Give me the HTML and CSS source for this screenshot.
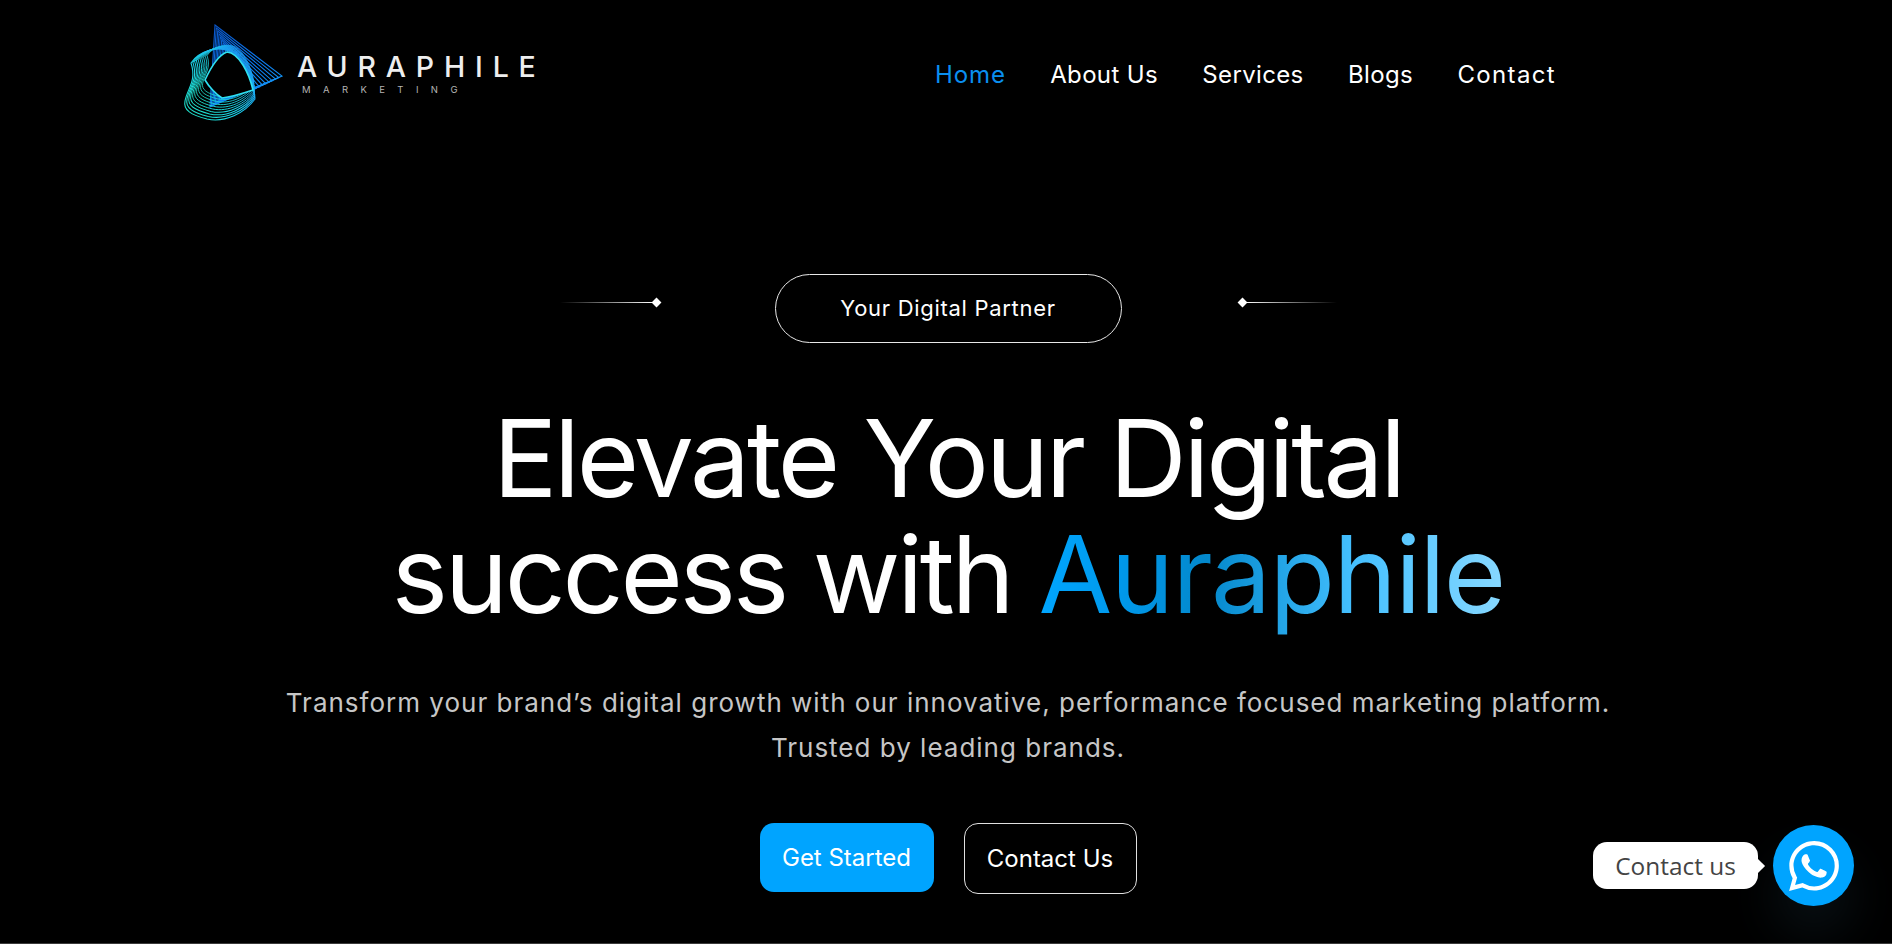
FILE: index.html
```html
<!DOCTYPE html>
<html lang="en">
<head>
<meta charset="utf-8">
<title>Auraphile Marketing</title>
<link rel="stylesheet" href="styles.css">
</head>
<body>
<div class="page">
  <header class="header">
    <a class="logo" href="#">
      <svg class="logo-mark" viewBox="0 0 120 115" width="120" height="115" aria-hidden="true">
        <defs>
          <linearGradient id="blue" gradientUnits="userSpaceOnUse" x1="40" y1="10" x2="100" y2="90">
            <stop offset="0" stop-color="#0a55c8"/>
            <stop offset="0.6" stop-color="#0c7cf0"/>
            <stop offset="1" stop-color="#1aa4f5"/>
          </linearGradient>
          <linearGradient id="teal" gradientUnits="userSpaceOnUse" x1="10" y1="100" x2="75" y2="50">
            <stop offset="0" stop-color="#1fe0c4"/>
            <stop offset="0.5" stop-color="#1cd0e8"/>
            <stop offset="1" stop-color="#1a90f5"/>
          </linearGradient>
          <path id="blob" d="M16 48C24 36 42 31 54 36C66 42 76 62 80 84C70 98 50 108 32 104C16 100 8 95 10 86C12 74 22 66 16 48Z"/>
        </defs>
        <g class="tri">
          <path d="M40 10L107 61L35 92Z"/>
          <path d="M41.3 13L103.8 62.6L36.3 91Z"/>
          <path d="M42.7 16L100.6 64.1L37.7 90Z"/>
          <path d="M44 19L97.3 65.7L39 89Z"/>
          <path d="M45.3 22L94.1 67.2L40.3 88Z"/>
          <path d="M46.7 25L90.9 68.8L41.7 87Z"/>
          <path d="M48 28L87.7 70.3L43 86Z"/>
          <path d="M49.3 31L84.4 71.9L44.3 85Z"/>
          <path d="M50.7 34L81.2 73.4L45.7 84Z"/>
        </g>
        <g class="band">
          <use href="#blob"/>
          <use href="#blob" transform="translate(2.3 .6) scale(.97)"/>
          <use href="#blob" transform="translate(4.6 1.2) scale(.94)"/>
          <use href="#blob" transform="translate(6.8 1.8) scale(.91)"/>
          <use href="#blob" transform="translate(9.1 2.4) scale(.88)"/>
          <use href="#blob" transform="translate(11.4 3) scale(.85)"/>
          <use href="#blob" transform="translate(13.6 3.6) scale(.82)"/>
          <use href="#blob" transform="translate(15.9 4.2) scale(.79)"/>
          <use href="#blob" transform="translate(18.2 4.8) scale(.76)"/>
          <use href="#blob" transform="translate(20.4 5.4) scale(.73)"/>
        </g>
        <path class="hole" d="M52 37C64 38 74 58 78 75C66 79 56 82 47 83C42 80 34 72 30 65C36 52 44 40 52 37Z"/>
      </svg>
      <span class="logo-text">
        <span class="logo-name">AURAPHILE</span>
        <span class="logo-sub">MARKETING</span>
      </span>
    </a>
    <nav class="nav">
      <a class="nav-link active" href="#">Home</a>
      <a class="nav-link" href="#">About Us</a>
      <a class="nav-link" href="#">Services</a>
      <a class="nav-link" href="#">Blogs</a>
      <a class="nav-link nav-last" href="#">Contact</a>
    </nav>
  </header>

  <main class="hero">
    <div class="tag-row">
      <span class="orn orn-left"><i class="line"></i><i class="dia"></i></span>
      <span class="pill">Your Digital Partner</span>
      <span class="orn orn-right"><i class="dia"></i><i class="line"></i></span>
    </div>
    <h1 class="title">Elevate Your Digital<br>success with <span class="grad">Auraphile</span></h1>
    <p class="lead">Transform your brand’s digital growth with our innovative, performance focused marketing platform.<br>Trusted by leading brands.</p>
    <div class="actions">
      <a class="btn btn-fill" href="#">Get Started</a>
      <a class="btn btn-line" href="#">Contact Us</a>
    </div>
  </main>
</div>

<div class="chat">
  <span class="chat-bubble">Contact us</span>
  <a class="chat-btn" href="#" aria-label="WhatsApp">
    <svg viewBox="0 0 24 24" width="50" height="50" aria-hidden="true"><path fill="#fff" d="M17.472 14.382c-.297-.149-1.758-.867-2.03-.967-.273-.099-.471-.148-.67.15-.197.297-.767.966-.94 1.164-.173.199-.347.223-.644.075-.297-.15-1.255-.463-2.39-1.475-.883-.788-1.48-1.761-1.653-2.059-.173-.297-.018-.458.13-.606.134-.133.298-.347.446-.52.149-.174.198-.298.298-.497.099-.198.05-.371-.025-.52-.075-.149-.669-1.612-.916-2.207-.242-.579-.487-.5-.669-.51-.173-.008-.371-.01-.57-.01-.198 0-.52.074-.792.372-.272.297-1.04 1.016-1.04 2.479 0 1.462 1.065 2.875 1.213 3.074.149.198 2.096 3.2 5.077 4.487.709.306 1.262.489 1.694.625.712.227 1.36.195 1.871.118.571-.085 1.758-.719 2.006-1.413.248-.694.248-1.289.173-1.413-.074-.124-.272-.198-.57-.347m-5.421 7.403h-.004a9.87 9.87 0 01-5.031-1.378l-.361-.214-3.741.982.998-3.648-.235-.374a9.86 9.86 0 01-1.51-5.26c.001-5.45 4.436-9.884 9.888-9.884 2.64 0 5.122 1.03 6.988 2.898a9.825 9.825 0 012.893 6.994c-.003 5.45-4.437 9.884-9.885 9.884m8.413-18.297A11.815 11.815 0 0012.05 0C5.495 0 .16 5.335.157 11.892c0 2.096.547 4.142 1.588 5.945L.057 24l6.305-1.654a11.882 11.882 0 005.683 1.448h.005c6.554 0 11.89-5.335 11.893-11.893a11.821 11.821 0 00-3.48-8.413z"/></svg>
  </a>
</div>
</body>
</html>
```

FILE: styles.css
```css
* { box-sizing: border-box; }
html, body { margin: 0; height: 100%; background: #000; overflow: hidden; }
body { font-family: Inter, "Liberation Sans", sans-serif; color: #fff; }
a { color: inherit; text-decoration: none; }

.page { height: 944px; border-bottom: 1px solid #3a3a3a; }

.header {
  height: 148px;
  padding: 0 337px 0 175px;
  display: flex;
  align-items: center;
  justify-content: space-between;
}
.logo { display: flex; align-items: center; gap: 2px; padding-bottom: 3px; }
.logo-mark { display: block; }
.tri path { fill: none; stroke: url(#blue); stroke-width: 1.1; }
.band use { fill: none; stroke: url(#teal); stroke-width: 1.1; }
.hole { fill: #000; stroke: #2fe0f0; stroke-width: 1.6; }
.logo-text { display: flex; flex-direction: column; padding-top: 3px; }
.logo-name { font-size: 28.5px; font-weight: 500; letter-spacing: 9.85px; line-height: 32px; color: #eee; white-space: nowrap; }
.logo-sub { font-size: 9.5px; font-weight: 400; letter-spacing: 12.4px; line-height: 14px; color: #b4b4b4; padding-left: 5px; white-space: nowrap; }

.nav { display: flex; gap: 44.4px; padding-top: 2px; }
.nav-link { font-size: 24px; line-height: 32px; letter-spacing: .35px; white-space: nowrap; }
.nav-last { letter-spacing: 1.35px; margin-right: -1px; }
.nav-link.active { color: #0a8ff0; letter-spacing: .9px; }

.hero { padding: 126px 0 0 4px; display: flex; flex-direction: column; align-items: center; }
.tag-row { display: flex; gap: 115px; align-items: flex-start; }
.pill {
  width: 347px;
  height: 69px;
  padding-bottom: 2px;
  border: 1px solid #e8e8e8;
  border-radius: 35px;
  display: flex;
  align-items: center;
  justify-content: center;
  font-size: 22px;
  letter-spacing: .7px;
}
.orn { width: 100px; height: 10px; margin-top: 23px; display: flex; align-items: center; }
.orn-right { padding-left: 2px; }
.line { flex: 1; height: 1px; }
.orn-left .line { background: linear-gradient(90deg, transparent, #fff); }
.orn-right .line { background: linear-gradient(90deg, #fff, transparent); }
.dia { width: 7px; height: 7px; background: #fff; transform: rotate(45deg); flex: none; }

.title {
  margin: 57px 0 0;
  font-size: 107px;
  font-weight: 400;
  line-height: 116px;
  letter-spacing: -3.25px;
  text-align: center;
  white-space: nowrap;
}
.grad {
  letter-spacing: -1.6px;
  background: linear-gradient(90deg, #00a6ff 0%, #0098ea 18%, #0388cc 36%, #23a4e6 52%, #45c0ff 68%, #88d8ff 100%);
  -webkit-background-clip: text;
  background-clip: text;
  color: transparent;
}
.lead {
  margin: 48px 0 0;
  font-size: 26px;
  line-height: 45px;
  letter-spacing: 1px;
  color: #c6c6c6;
  text-align: center;
  white-space: nowrap;
}
.actions { margin-top: 53px; display: flex; gap: 30px; align-items: flex-start; }
.btn {
  width: 174px;
  display: flex;
  align-items: center;
  justify-content: center;
  font-size: 24px;
  border-radius: 14px;
  padding-bottom: 1px;
}
.btn-fill { height: 69px; background: #00a4ff; }
.btn-line { height: 71px; width: 173px; border: 1px solid #e0e0e0; }

.chat { position: fixed; right: 38px; bottom: 38px; display: flex; align-items: center; }
.chat-btn {
  width: 81px;
  height: 81px;
  border-radius: 50%;
  background: #00a4ff;
  display: flex;
  align-items: center;
  justify-content: center;
  box-shadow: 0 30px 50px rgba(90, 160, 200, .1);
}
.chat-bubble {
  position: relative;
  width: 165px;
  height: 47px;
  margin-right: 15px;
  background: #fff;
  border-radius: 14px;
  color: #444;
  font-family: "Open Sans", sans-serif;
  font-size: 24.4px;
  display: flex;
  align-items: center;
  justify-content: center;
}
.chat-bubble::after {
  content: "";
  position: absolute;
  right: -5px;
  top: 19px;
  width: 10px;
  height: 10px;
  background: #fff;
  transform: rotate(45deg);
}
```
